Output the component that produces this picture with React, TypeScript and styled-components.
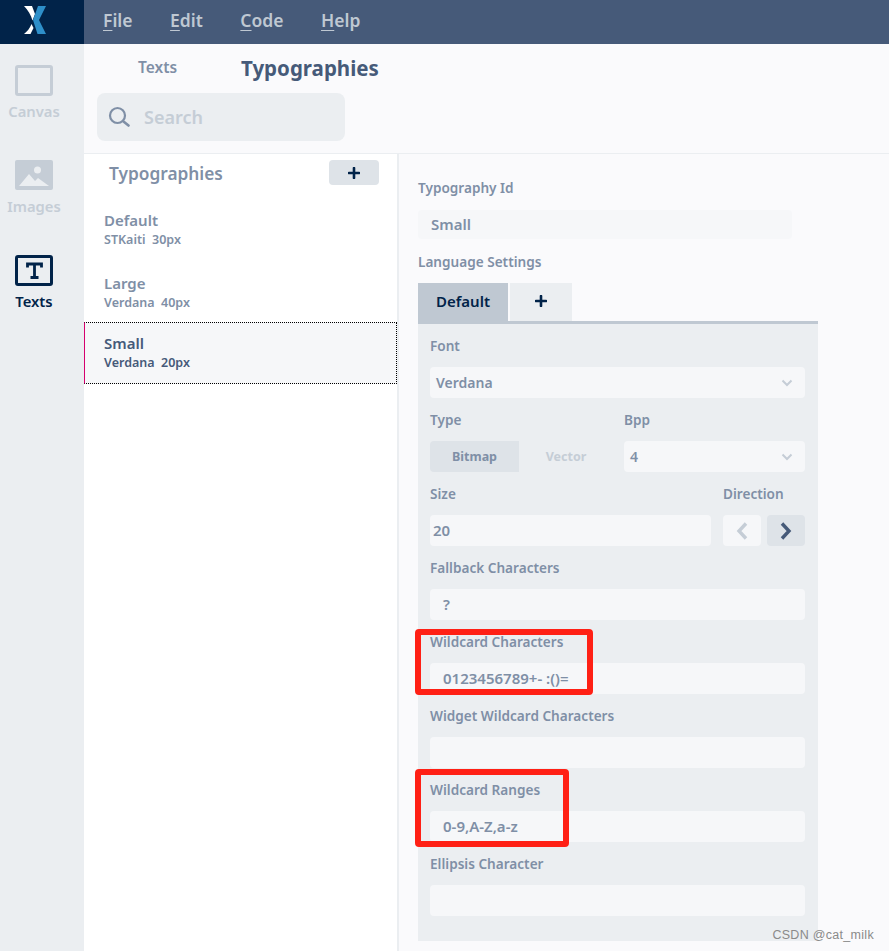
import React from 'react'
import styled, { createGlobalStyle } from 'styled-components';

const colors = {
  navy: '#012349',
  slate: '#465a79',
  muted: '#7f8fa6',
  faint: '#c5cdd6',
  panel: '#ebeef1',
  field: '#f6f7f9',
  page: '#fafafc',
  button: '#dee3e8',
  tab: '#bfc8d2',
};

const Plus = () => (
  <svg width="12" height="12" viewBox="0 0 12 12">
    <path d="M6 1v10M1 6h10" stroke={colors.navy} strokeWidth="2.6" strokeLinecap="round" />
  </svg>
);

const Chevron = () => (
  <svg width="12" height="8" viewBox="0 0 12 8">
    <path d="M1.5 1.5L6 6l4.500-4.500" fill="none" stroke={colors.faint} strokeWidth="2" />
  </svg>
);

const App = () => {
  return (
    <AppContainer>
      <GlobalStyle />
      <Header>
        <Logo>
          <svg width="24" height="30" viewBox="0 0 24 30">
            <path d="M1 1h8l3 8-2.500 6.500C8 10 5 5 1 1z" fill="#fff" />
            <path d="M1 29h6.500l3-6-2-4C7 23 4.500 26 1 29z" fill="#fff" />
            <path d="M15 1h8l-7 14 7 14h-8.500L10 15z" fill="#2e8fc9" />
          </svg>
        </Logo>
        <Menu>
          <MenuItem><u>F</u>ile</MenuItem>
          <MenuItem><u>E</u>dit</MenuItem>
          <MenuItem><u>C</u>ode</MenuItem>
          <MenuItem><u>H</u>elp</MenuItem>
        </Menu>
      </Header>
      <Body>
        <Sidebar>
          <NavItem>
            <svg width="38" height="31" viewBox="0 0 38 31">
              <rect x="1.500" y="1.500" width="35" height="28" rx="1.500" fill="none" stroke={colors.faint} strokeWidth="3" />
            </svg>
            <NavLabel>Canvas</NavLabel>
          </NavItem>
          <NavItem>
            <svg width="38" height="31" viewBox="0 0 38 31">
              <rect width="38" height="30" rx="2" fill={colors.faint} />
              <circle cx="22.500" cy="10" r="3.500" fill={colors.panel} />
              <path d="M4 26l10-12 6 7 3-3 11 8z" fill={colors.panel} />
            </svg>
            <NavLabel>Images</NavLabel>
          </NavItem>
          <NavItem>
            <svg width="38" height="31" viewBox="0 0 38 31">
              <rect x="1.500" y="1.500" width="35" height="28" rx="1.500" fill="none" stroke={colors.navy} strokeWidth="3" />
              <path d="M12.500 12.500v-3.500h14v3.500M19.500 9v13.500M15.500 22.500h8" fill="none" stroke={colors.navy} strokeWidth="2.800" />
            </svg>
            <NavLabel $active>Texts</NavLabel>
          </NavItem>
        </Sidebar>
        <Main>
          <TopBar>
            <TitleRow>
              <Crumb>Texts</Crumb>
              <PageTitle>Typographies</PageTitle>
            </TitleRow>
            <SearchBox>
              <svg width="22" height="22" viewBox="0 0 22 22">
                <circle cx="9.500" cy="9.500" r="7.500" fill="none" stroke={colors.muted} strokeWidth="2.200" />
                <path d="M15.500 15.500l5 4" stroke={colors.muted} strokeWidth="2.600" strokeLinecap="round" />
              </svg>
              <SearchText>Search</SearchText>
            </SearchBox>
          </TopBar>
          <Columns>
            <ListColumn>
              <ListHeader>
                <ListTitle>Typographies</ListTitle>
                <AddButton><Plus /></AddButton>
              </ListHeader>
              <ListItem>
                <ItemName>Default</ItemName>
                <ItemSub>STKaiti&nbsp; 30px</ItemSub>
              </ListItem>
              <ListItem>
                <ItemName>Large</ItemName>
                <ItemSub>Verdana&nbsp; 40px</ItemSub>
              </ListItem>
              <ListItem $selected>
                <ItemName>Small</ItemName>
                <ItemSub>Verdana&nbsp; 20px</ItemSub>
              </ListItem>
            </ListColumn>
            <Detail>
              <DetailLabel>Typography Id</DetailLabel>
              <IdInput>Small</IdInput>
              <DetailLabel>Language Settings</DetailLabel>
              <Tabs>
                <Tab $active>Default</Tab>
                <Tab><Plus /></Tab>
              </Tabs>
              <Panel>
                <Field>
                  <Label>Font</Label>
                  <Select>Verdana<Chevron /></Select>
                </Field>
                <TwoCols>
                  <Field>
                    <Label>Type</Label>
                    <Toggle>
                      <ToggleOption $active>Bitmap</ToggleOption>
                      <ToggleOption>Vector</ToggleOption>
                    </Toggle>
                  </Field>
                  <Field>
                    <Label>Bpp</Label>
                    <Select>4<Chevron /></Select>
                  </Field>
                </TwoCols>
                <SizeRow>
                  <Field>
                    <Label>Size</Label>
                    <Input $tight>20</Input>
                  </Field>
                  <Field>
                    <Label>Direction</Label>
                    <Arrows>
                      <ArrowButton>
                        <svg width="12" height="18" viewBox="0 0 12 18">
                          <path d="M10 1.500L3 9l7 7.500" fill="none" stroke={colors.faint} strokeWidth="3.400" />
                        </svg>
                      </ArrowButton>
                      <ArrowButton $active>
                        <svg width="12" height="18" viewBox="0 0 12 18">
                          <path d="M2 1.500L9 9l-7 7.500" fill="none" stroke={colors.slate} strokeWidth="3.400" />
                        </svg>
                      </ArrowButton>
                    </Arrows>
                  </Field>
                </SizeRow>
                <Field>
                  <Label>Fallback Characters</Label>
                  <Input>?</Input>
                </Field>
                <Field>
                  <Label>Wildcard Characters</Label>
                  <Input>0123456789+- :()=</Input>
                  <Highlight $width={178} $height={66} $below={1} />
                </Field>
                <Field>
                  <Label>Widget Wildcard Characters</Label>
                  <Input />
                </Field>
                <Field>
                  <Label>Wildcard Ranges</Label>
                  <Input>0-9,A-Z,a-z</Input>
                  <Highlight $width={154} $height={78} $below={5} />
                </Field>
                <Field>
                  <Label>Ellipsis Character</Label>
                  <Input />
                </Field>
              </Panel>
            </Detail>
          </Columns>
        </Main>
      </Body>
      <Watermark>CSDN @cat_milk</Watermark>
    </AppContainer>
  );
}

const GlobalStyle = createGlobalStyle`
  html, body {
    margin: 0;
    height: 100%;
    background: ${colors.page};
  }
  #root {
    height: 100%;
  }
  * {
    box-sizing: border-box;
  }
`;

const AppContainer = styled.div`
  position: relative;
  display: flex;
  flex-direction: column;
  width: 889px;
  height: 951px;
  overflow: hidden;
  font-family: "Noto Sans", "Open Sans", sans-serif;
  font-weight: 600;
  color: ${colors.muted};
`;

const Header = styled.header`
  display: flex;
  height: 44px;
  flex: none;
  background: ${colors.slate};
`;

const Logo = styled.div`
  display: flex;
  align-items: center;
  justify-content: center;
  width: 84px;
  background: ${colors.navy};
  padding: 0 14px 5px 0;
`;

const Menu = styled.nav`
  display: flex;
  align-items: center;
  gap: 37.500px;
  padding: 0 0 4px 19px;
`;

const MenuItem = styled.span`
  font-size: 17.500px;
  color: ${colors.tab};
  u {
    text-underline-offset: 3px;
  }
`;

const Body = styled.div`
  display: flex;
  flex: 1;
  min-height: 0;
`;

const Sidebar = styled.aside`
  display: flex;
  flex-direction: column;
  gap: 24px;
  width: 84px;
  flex: none;
  padding: 21px 16px 0 0;
  background: ${colors.panel};
`;

const NavItem = styled.div`
  display: flex;
  flex-direction: column;
  align-items: center;
  height: 71px;
  svg {
    flex: none;
  }
`;

const NavLabel = styled.span<{ $active?: boolean }>`
  margin-top: 5px;
  font-size: 14.800px;
  line-height: 20px;
  color: ${({ $active }) => ($active ? colors.navy : colors.faint)};
`;

const Main = styled.main`
  display: flex;
  flex-direction: column;
  flex: 1;
  min-width: 0;
`;

const TopBar = styled.div`
  height: 110px;
  flex: none;
  padding: 12px 0 0 13px;
  border-bottom: 1px solid ${colors.panel};
`;

const TitleRow = styled.div`
  display: flex;
  align-items: center;
  height: 24px;
  padding-left: 41px;
`;

const Crumb = styled.span`
  width: 103px;
  margin-bottom: 2px;
  font-size: 15.500px;
`;

const PageTitle = styled.h1`
  margin: 0;
  font-size: 20.500px;
  font-weight: 700;
  color: ${colors.slate};
`;

const SearchBox = styled.div`
  display: flex;
  align-items: center;
  gap: 14px;
  width: 248px;
  height: 48px;
  margin-top: 13px;
  padding-left: 11px;
  border-radius: 8px;
  background: ${colors.panel};
`;

const SearchText = styled.span`
  font-size: 18px;
  color: ${colors.faint};
`;

const Columns = styled.div`
  display: flex;
  flex: 1;
  min-height: 0;
`;

const ListColumn = styled.section`
  width: 315px;
  flex: none;
  background: #fff;
  border-right: 2px solid ${colors.panel};
`;

const ListHeader = styled.div`
  display: flex;
  align-items: center;
  justify-content: space-between;
  height: 42px;
  padding: 0 18px 5px 25px;
`;

const ListTitle = styled.h2`
  margin: 2px 0 0;
  font-size: 17.300px;
  font-weight: 600;
`;

const AddButton = styled.button`
  display: flex;
  align-items: center;
  justify-content: center;
  width: 50px;
  height: 25px;
  padding: 0;
  border: none;
  border-radius: 4px;
  background: ${colors.button};
`;

const ListItem = styled.div<{ $selected?: boolean }>`
  display: flex;
  flex-direction: column;
  justify-content: center;
  height: ${({ $selected }) => ($selected ? '62px' : '63px')};
  padding: 2px 0 0 20px;
  color: ${({ $selected }) => ($selected ? colors.slate : colors.muted)};
  ${({ $selected }) =>
    $selected &&
    `
    background: ${colors.field};
    border: 1px dotted #000;
    border-left: 1px solid #d6006e;
    padding: 0 0 3px 19px;
  `}
`;

const ItemName = styled.div`
  font-size: 15px;
  line-height: 20px;
`;

const ItemSub = styled.div`
  margin-top: 1px;
  font-size: 12.500px;
  line-height: 17px;
`;

const Detail = styled.section`
  flex: 1;
  min-width: 0;
  padding: 23px 0 0 19px;
`;

const DetailLabel = styled.div`
  height: 22px;
  font-size: 13.600px;
  line-height: 22px;
`;

const IdInput = styled.div`
  width: 374px;
  height: 29px;
  margin: 11px 0 12px;
  padding-left: 13px;
  border-radius: 4px;
  background: ${colors.field};
  font-size: 15px;
  line-height: 29px;
`;

const Tabs = styled.div`
  display: flex;
  gap: 2px;
  width: 400px;
  height: 41px;
  margin-top: 10px;
  border-bottom: 3px solid ${colors.tab};
`;

const Tab = styled.div<{ $active?: boolean }>`
  display: flex;
  align-items: center;
  justify-content: center;
  width: ${({ $active }) => ($active ? '90px' : '62px')};
  padding-bottom: 2px;
  background: ${({ $active }) => ($active ? colors.tab : colors.panel)};
  font-size: 15px;
  color: ${colors.navy};
`;

const Panel = styled.div`
  display: flex;
  flex-direction: column;
  gap: 11px;
  width: 400px;
  height: 617px;
  padding: 11px 13px 0 12px;
  background: ${colors.panel};
`;

const Field = styled.div`
  position: relative;
  min-width: 0;
`;

const Label = styled.div`
  height: 22px;
  margin-bottom: 10px;
  font-size: 13.600px;
  line-height: 22px;
`;

const Input = styled.div<{ $tight?: boolean }>`
  height: 31px;
  padding-left: ${({ $tight }) => ($tight ? '3px' : '13px')};
  border-radius: 4px;
  background: ${colors.field};
  font-size: 15px;
  line-height: 31px;
`;

const Select = styled(Input)`
  display: flex;
  align-items: center;
  justify-content: space-between;
  padding: 0 12px 0 6px;
  font-size: 14px;
`;

const TwoCols = styled.div`
  display: grid;
  grid-template-columns: 183px 181px;
  gap: 11px;
`;

const Toggle = styled.div`
  display: grid;
  grid-template-columns: 89px 94px;
  height: 31px;
`;

const ToggleOption = styled.div<{ $active?: boolean }>`
  display: flex;
  align-items: center;
  justify-content: center;
  border-radius: 4px 0 0 4px;
  background: ${({ $active }) => ($active ? colors.button : 'transparent')};
  font-size: 12.500px;
  font-weight: 700;
  color: ${({ $active }) => ($active ? colors.muted : colors.faint)};
`;

const SizeRow = styled.div`
  display: grid;
  grid-template-columns: 281px 82px;
  gap: 12px;
`;

const Arrows = styled.div`
  display: flex;
  gap: 6px;
`;

const ArrowButton = styled.div<{ $active?: boolean }>`
  display: flex;
  align-items: center;
  justify-content: center;
  width: 38px;
  height: 31px;
  border-radius: 4px;
  background: ${({ $active }) => ($active ? colors.button : colors.field)};
`;

const Highlight = styled.div<{ $width: number; $height: number; $below: number }>`
  position: absolute;
  left: -15px;
  bottom: -${({ $below }) => $below}px;
  width: ${({ $width }) => $width}px;
  height: ${({ $height }) => $height}px;
  border: 6px solid #ff2015;
  border-radius: 4px;
`;

const Watermark = styled.div`
  position: absolute;
  right: 15px;
  bottom: 9px;
  font-family: "Liberation Sans", Arial, sans-serif;
  font-size: 12.500px;
  font-weight: 400;
  letter-spacing: 0.300px;
  color: #8a8a8a;
`;

export default App;
